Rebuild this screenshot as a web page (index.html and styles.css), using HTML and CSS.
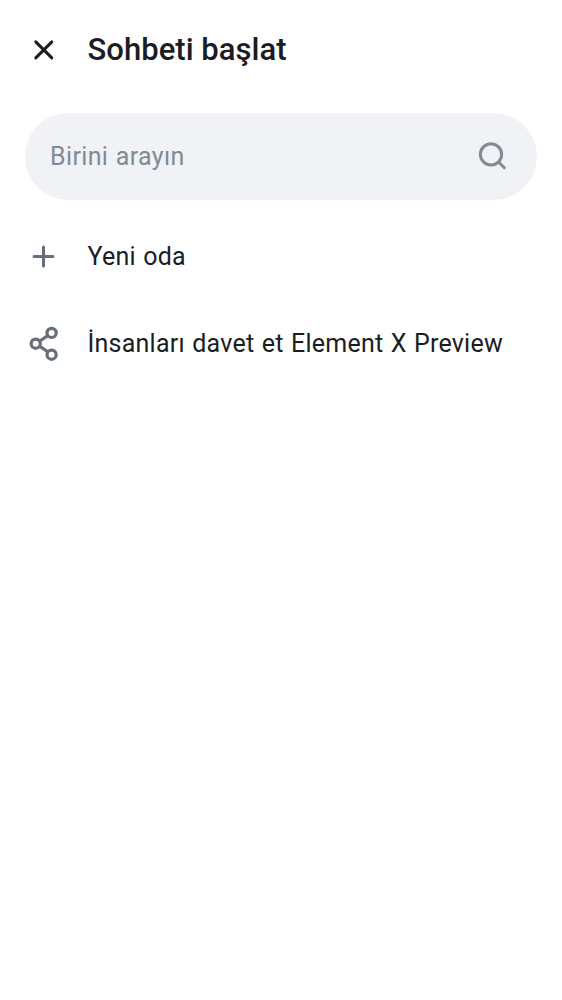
FILE: index.html
```html
<!DOCTYPE html>
<html lang="tr">
<head>
<meta charset="utf-8">
<title>Sohbeti başlat</title>
<link rel="stylesheet" href="styles.css">
</head>
<body>
<header class="top-bar">
  <button class="icon-button" aria-label="Kapat">
    <svg class="icon close" viewBox="0 0 38 38"><path d="M10.8 10.9 26.8 26.9M26.8 10.9 10.8 26.9"/></svg>
  </button>
  <h1 class="title">Sohbeti başlat</h1>
</header>
<main>
  <div class="search">
    <span class="placeholder">Birini arayın</span>
    <svg class="icon" viewBox="0 0 38 38"><circle cx="17" cy="16.4" r="10.6"/><path d="m24.8 24.2 5.5 5.5"/></svg>
  </div>
  <div class="row">
    <svg class="icon" viewBox="0 0 38 38"><path d="M18.5 9.1v18.8M9.1 18.5h18.8"/></svg>
    <span class="label">Yeni oda</span>
  </div>
  <div class="row">
    <svg class="icon share" viewBox="0 0 38 38"><path d="m14.5 16.3 8.3-5.7M14.5 21.1l8.3 5.7"/><circle cx="10.7" cy="18.7" r="4.6"/><circle cx="26.6" cy="7.9" r="4.6"/><circle cx="26.6" cy="29.7" r="4.6"/></svg>
    <span class="label">İnsanları davet et Element X Preview</span>
  </div>
</main>
</body>
</html>
```
FILE: styles.css
```css
body {
  margin: 0;
  background: #fff;
  color: #1b1d22;
  font-family: Roboto, sans-serif;
}
.top-bar {
  display: flex;
  align-items: center;
  gap: 24.5px;
  height: 100px;
  padding: 0 25px;
}
.icon-button {
  display: flex;
  padding: 0;
  border: 0;
  background: none;
}
.icon {
  flex: none;
  width: 38px;
  height: 38px;
  fill: none;
  stroke: #656e79;
  stroke-width: 3;
  stroke-linecap: round;
}
.icon.close {
  stroke: #1b1d22;
}
.icon.share {
  stroke-width: 3.2;
  stroke-linecap: butt;
}
.title {
  margin: 0;
  font-size: 31px;
  font-weight: 500;
  line-height: 40px;
  letter-spacing: 0.04px;
  white-space: nowrap;
}
.search {
  display: flex;
  align-items: center;
  justify-content: space-between;
  box-sizing: border-box;
  height: 87px;
  margin: 13px 25px;
  padding: 0 25px;
  border-radius: 44px;
  background: #f0f2f5;
  color: #818a95;
}
.search .icon {
  stroke: #818a95;
}
.placeholder,
.label {
  font-size: 25px;
  font-weight: 370;
  line-height: 38px;
  letter-spacing: 0.36px;
  word-spacing: 0.9px;
  white-space: nowrap;
}
.label {
  letter-spacing: 0.24px;
}
.row {
  display: flex;
  align-items: center;
  gap: 24.5px;
  height: 87px;
  padding: 0 25px;
}
```
